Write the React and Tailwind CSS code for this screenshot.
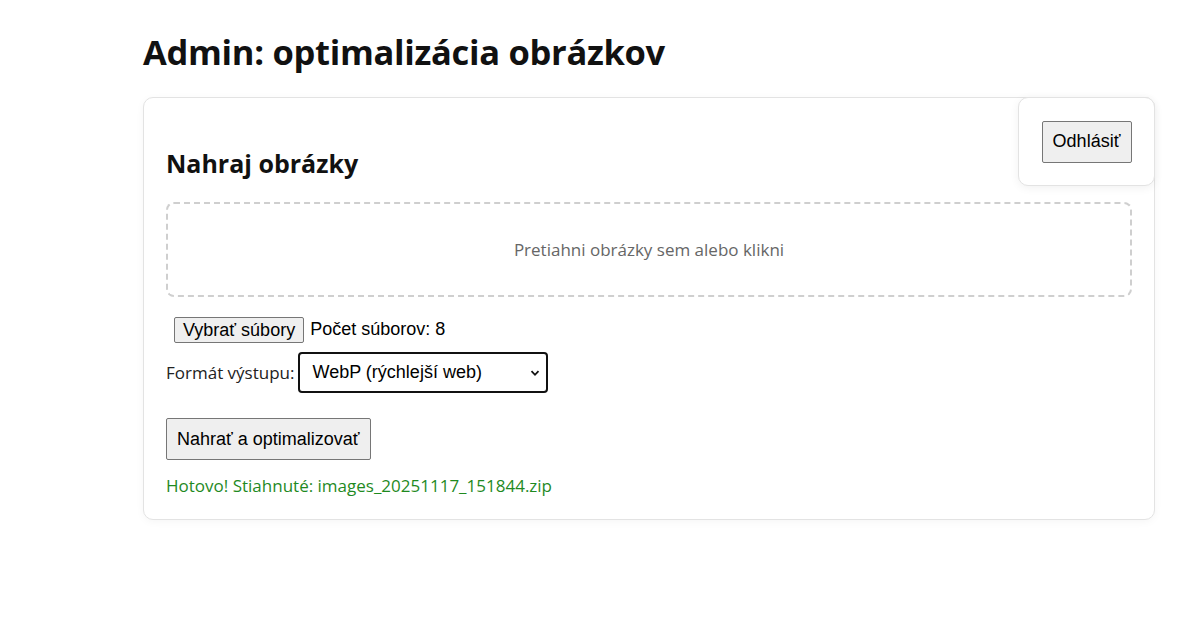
import React from "react";

const ui = { fontFamily: '"Open Sans", "Noto Sans", sans-serif' };
const arial = { fontFamily: '"Liberation Sans", Arial, sans-serif' };

const App = () => {
    return (
        <div className="min-h-[631px] bg-white text-[#111]" style={ui}>
            <div className="ml-[143px] w-[1012px] pt-[28px]">
                <h1 className="text-[34.5px] font-bold leading-[48px] tracking-[-0.3px]">Admin: optimalizácia obrázkov</h1>

                <div className="relative mt-[21px] rounded-[10px] border border-[#e3e3e3] bg-white px-[22px] pt-[47px] pb-[21px] shadow-[0_2px_8px_rgba(0,0,0,0.04)]">
                    {/* logout box */}
                    <div className="absolute -right-px -top-px flex h-[89px] w-[137px] items-center justify-center rounded-[10px] border border-[#e3e3e3] bg-white shadow-[0_2px_10px_rgba(0,0,0,0.06)]">
                        <button
                            className="h-[42px] w-[90px] rounded-[2px] border border-[#767676] bg-[#efefef] text-[18px] text-black"
                            style={arial}
                        >
                            Odhlásiť
                        </button>
                    </div>

                    <h2 className="text-[25px] font-bold leading-[36px]">Nahraj obrázky</h2>

                    <div className="mt-[21px] flex h-[95px] items-center justify-center rounded-[8px] border-2 border-dashed border-[#cfcfcf] text-[17px] text-[#666]">
                        Pretiahni obrázky sem alebo klikni
                    </div>

                    <div className="mt-[19px] flex items-center gap-[6px] pl-[8px] text-[18px] text-black" style={arial}>
                        <button className="h-[26px] rounded-[2px] border border-[#767676] bg-[#efefef] px-[8px] text-[18px] leading-[20px] text-black">
                            Vybrať súbory
                        </button>
                        <span>Počet súborov: 8</span>
                    </div>

                    <div className="mt-[9px] flex items-center gap-[3px]">
                        <label className="text-[17px] text-[#222]">Formát výstupu:</label>
                        <div
                            className="relative flex h-[41px] w-[250px] items-center rounded-[4px] border-2 border-[#111] bg-white pl-[13px] text-[18px] text-black"
                            style={arial}
                        >
                            WebP (rýchlejší web)
                            <svg className="absolute right-[6px] top-[14px]" width="10" height="10" viewBox="0 0 10 10" fill="none">
                                <path d="M1.5 3.2 5 6.8 8.5 3.2" stroke="#111" strokeWidth="1.8" />
                            </svg>
                        </div>
                    </div>

                    <button
                        className="mt-[25px] h-[42px] rounded-[2px] border border-[#767676] bg-[#efefef] px-[10px] text-[18px] text-black"
                        style={arial}
                    >
                        Nahrať a optimalizovať
                    </button>

                    <p className="mt-[14px] text-[17px] leading-[24px] text-[#1f8a1f]">
                        Hotovo! Stiahnuté: images_20251117_151844.zip
                    </p>
                </div>
            </div>
        </div>
    );
};

export default App;
